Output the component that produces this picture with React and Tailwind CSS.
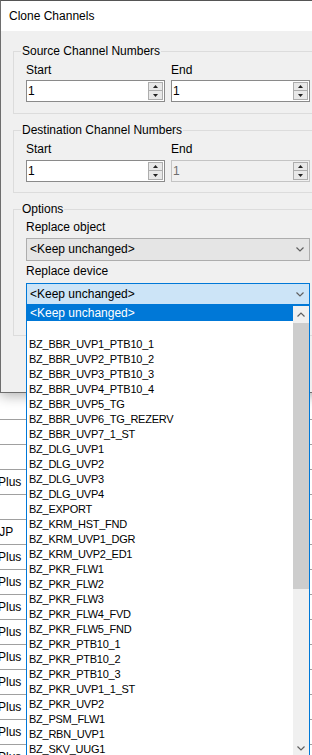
import React from 'react';

const devices = [
  'BZ_BBR_UVP1_PTB10_1', 'BZ_BBR_UVP2_PTB10_2', 'BZ_BBR_UVP3_PTB10_3', 'BZ_BBR_UVP4_PTB10_4',
  'BZ_BBR_UVP5_TG', 'BZ_BBR_UVP6_TG_REZERV', 'BZ_BBR_UVP7_1_ST', 'BZ_DLG_UVP1', 'BZ_DLG_UVP2',
  'BZ_DLG_UVP3', 'BZ_DLG_UVP4', 'BZ_EXPORT', 'BZ_KRM_HST_FND', 'BZ_KRM_UVP1_DGR', 'BZ_KRM_UVP2_ED1',
  'BZ_PKR_FLW1', 'BZ_PKR_FLW2', 'BZ_PKR_FLW3', 'BZ_PKR_FLW4_FVD', 'BZ_PKR_FLW5_FND', 'BZ_PKR_PTB10_1',
  'BZ_PKR_PTB10_2', 'BZ_PKR_PTB10_3', 'BZ_PKR_UVP1_1_ST', 'BZ_PKR_UVP2', 'BZ_PSM_FLW1', 'BZ_RBN_UVP1',
  'BZ_SKV_UUG1',
];

const bgRows = ['', '', 'Plus', '', 'tJP', 'Plus', 'Plus', 'Plus', 'Plus', 'Plus', 'Plus', 'Plus', 'Plus', 'Plus'];

function Chevron({ up = false, className = '' }) {
  return (
    <svg width="8" height="5" viewBox="0 0 8 5" className={className}>
      <path d={up ? 'M0.5 4.5 L4 1 L7.5 4.5' : 'M0.5 0.5 L4 4 L7.5 0.5'} fill="none" stroke="#606060" strokeWidth="1.2" />
    </svg>
  );
}

function Spin({ disabled = false }) {
  return (
    <div className={`h-[22px] flex items-center border ${disabled ? 'bg-[#f0f0f0] border-[#c4c4c4] text-[#6d6d6d]' : 'bg-white border-[#8a8a8a]'}`}>
      <span className="flex-1 pl-[1px] leading-[15px]">1</span>
      <div className="flex flex-col mr-[1px] w-[15px]">
        <div className="h-[9px] bg-[#e8e8e8] border border-[#adadad] flex items-center justify-center">
          <svg width="5" height="3" viewBox="0 0 5 3"><path d="M0 3 L2.5 0 L5 3 Z" fill="#222" /></svg>
        </div>
        <div className="h-[9px] bg-[#e8e8e8] border border-t-0 border-[#adadad] flex items-center justify-center">
          <svg width="5" height="3" viewBox="0 0 5 3"><path d="M0 0 L2.5 3 L5 0 Z" fill="#222" /></svg>
        </div>
      </div>
    </div>
  );
}

function Group({ title, className = '', children }) {
  return (
    <fieldset className={`border border-[#dcdcdc] ${className}`}>
      <legend className="ml-[7px] px-[1px] leading-[15px]">{title}</legend>
      {children}
    </fieldset>
  );
}

function NumberRange({ disabledEnd = false, top, gap, bottom }) {
  return (
    <div className={`grid grid-cols-2 gap-x-[6px] px-[12px] ${top} ${bottom}`}>
      <div className={`leading-[15px] ${gap}`}>Start</div>
      <div className={`leading-[15px] ${gap}`}>End</div>
      <Spin />
      <Spin disabled={disabledEnd} />
    </div>
  );
}

export default function App() {
  return (
    <div className="relative w-[312px] h-[755px] overflow-hidden bg-white text-[12px] text-black font-['Liberation_Sans',Arial,sans-serif]">
      <div className="relative z-10 w-[336px] border border-[#6e6e6e] border-t-[#555] shadow-[0_3px_12px_rgba(0,0,0,0.3)]">
        <div className="h-[30px] bg-white pl-[8px] flex items-center leading-[15px]">Clone Channels</div>

        <div className="bg-[#f0f0f0] px-[12px] pt-[13px] pb-[56px]">
          <Group title="Source Channel Numbers">
            <NumberRange top="pt-[4px]" gap="mb-[2px]" bottom="pb-[11px]" />
          </Group>

          <Group title="Destination Channel Numbers" className="mt-[9px]">
            <NumberRange disabledEnd top="pt-[4px]" gap="mb-[3px]" bottom="pb-[10px]" />
          </Group>

          <Group title="Options" className="mt-[9px]">
            <div className="px-[12px] pt-[3px] pb-[30px]">
              <div className="leading-[15px] mb-[3px]">Replace object</div>
              <div className="h-[23px] flex items-center border border-[#adadad] bg-[#e5e5e5] pl-[3px] pr-[5px]">
                <span className="flex-1 leading-[15px]">&lt;Keep unchanged&gt;</span>
                <Chevron />
              </div>

              <div className="leading-[15px] mt-[3px] mb-[4px]">Replace device</div>
              <div className="relative">
                <div className="h-[22px] flex items-center border border-[#0078d7] bg-[#cce4f7] pl-[3px] pr-[5px]">
                  <span className="flex-1 leading-[15px]">&lt;Keep unchanged&gt;</span>
                  <Chevron />
                </div>

                <div className="absolute z-20 left-0 top-full w-full h-[453px] border border-[#0078d7] bg-white flex overflow-hidden">
                  <div className="flex-1 flex flex-col">
                    <div className="h-[15px] shrink-0 bg-[#0078d7] text-white pl-[3px] leading-[15px]">&lt;Keep unchanged&gt;</div>
                    <div className="h-[15px] shrink-0" />
                    {devices.map(d => (
                      <div key={d} className="h-[15px] shrink-0 pl-[2px] text-[11px] tracking-[-0.25px] leading-[17px] whitespace-nowrap">{d}</div>
                    ))}
                  </div>
                  <div className="w-[16px] bg-[#f0f0f0] flex flex-col">
                    <div className="h-[17px] flex items-center justify-center"><Chevron up /></div>
                    <div className="h-[266px] bg-[#cdcdcd]" />
                    <div className="flex-1" />
                    <div className="h-[17px] flex items-center justify-center"><Chevron /></div>
                  </div>
                </div>
              </div>
            </div>
          </Group>
        </div>
      </div>

      <div className="h-[27px] border-b border-[#a0a0a0]" />
      {bgRows.map((t, i) => (
        <div key={i} className="h-[25px] border-b border-[#a0a0a0] flex items-center">
          <span className={`leading-[15px] whitespace-nowrap ${t === 'tJP' ? '-ml-[4px]' : '-ml-[2px]'}`}>{t}</span>
        </div>
      ))}
    </div>
  );
}
